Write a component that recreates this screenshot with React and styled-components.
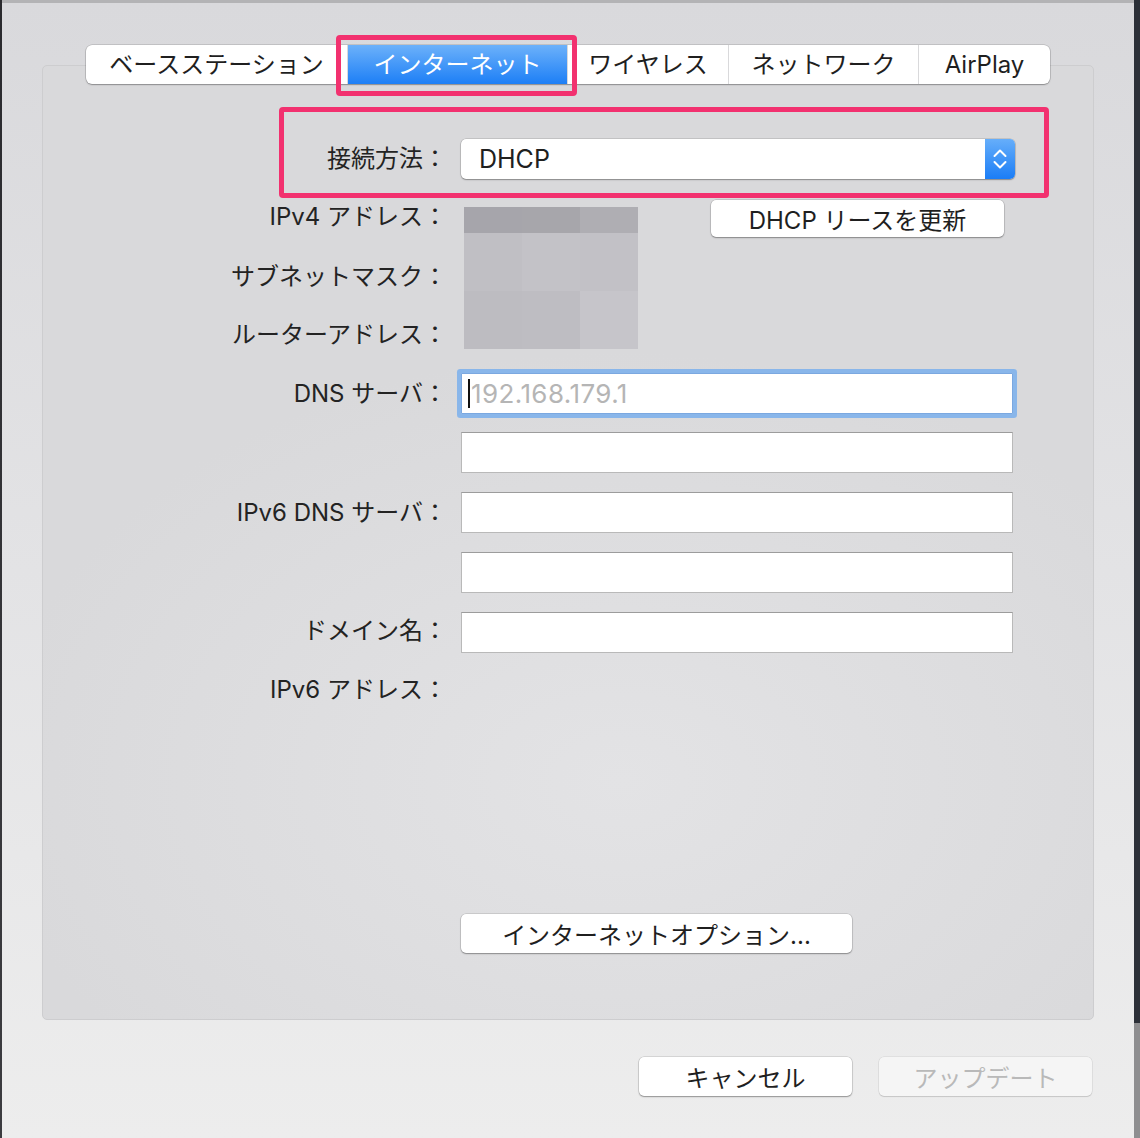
import React from 'react';
import styled, { createGlobalStyle } from 'styled-components';

const Global = createGlobalStyle`
  html, body { margin: 0; padding: 0; background: #e6e6e8; }
  body { font-family: "Inter", "Noto Sans CJK JP", sans-serif; color: #222; }
  * { box-sizing: border-box; }
`;

const Screen = styled.div`
  position: relative;
  width: 1140px;
  height: 1138px;
  display: flex;
  overflow: hidden;
  background: #2d3139;
`;

const LeftEdge = styled.div`
  flex: 0 0 2px;
  background: linear-gradient(#2a2a2e, #3c3c40);
`;

const RightEdge = styled.div`
  flex: 0 0 6px;
  display: flex;
  flex-direction: column;
`;

const EdgePart = styled.div`
  flex: ${(p) => (p.$fill ? 1 : `0 0 ${p.$h}px`)};
  background: ${(p) => p.$c};
`;

const Window = styled.div`
  flex: 1 1 auto;
  min-width: 0;
  display: flex;
  flex-direction: column;
  border-top: 3px solid #b3b3b5;
  background: linear-gradient(to bottom, #d9d9dc 0%, #e3e3e5 50%, #ededed 100%);
  padding: 42px 0 0 40px;
`;

const TabView = styled.div`
  width: 1052px;
  display: flex;
  flex-direction: column;
  align-items: center;
`;

const TabBar = styled.div`
  position: relative;
  z-index: 1;
  display: flex;
  height: 39px;
  background: #fff;
  border-radius: 6px;
  box-shadow: 0 0 0 0.5px rgba(0, 0, 0, 0.22), 0 1px 1.5px rgba(0, 0, 0, 0.28);
  overflow: hidden;
`;

const Tab = styled.div`
  width: ${(p) => p.$w}px;
  display: flex;
  align-items: center;
  justify-content: center;
  font-size: 24px;
  line-height: 39px;
  white-space: nowrap;
  color: ${(p) => (p.$active ? '#fff' : '#1f1f1f')};
  background: ${(p) => (p.$active ? 'linear-gradient(#6cb1fa, #1d7ff6)' : 'transparent')};
  border-left: ${(p) => (p.$first ? 'none' : '1px solid #d9d9db')};
`;

const GroupBox = styled.div`
  width: 1052px;
  height: 955px;
  margin-top: -19px;
  display: flex;
  flex-direction: column;
  padding: 73px 0 66px 0;
  border-radius: 5px;
  border: 1px solid #cdcdcf;
  background: radial-gradient(ellipse 60% 45% at 55% 75%, #e3e3e5 0%, #d9d9db 100%);
`;

const FormGrid = styled.div`
  display: grid;
  grid-template-columns: 404px 552px;
  column-gap: 14px;
  grid-auto-rows: 40px;
  row-gap: 19px;
`;

const Label = styled.div`
  grid-column: 1;
  grid-row: ${(p) => p.$row};
  justify-self: end;
  align-self: center;
  margin-top: ${(p) => p.$dy || 0}px;
  font-size: 24px;
  line-height: 40px;
  white-space: nowrap;
  color: #232323;
`;

const Popup = styled.div`
  grid-column: 2;
  grid-row: 1;
  width: 554px;
  height: 40px;
  display: flex;
  background: #fff;
  border-radius: 5px;
  box-shadow: 0 0 0 0.5px rgba(0, 0, 0, 0.2), 0 1px 1.5px rgba(0, 0, 0, 0.3);
  overflow: hidden;
`;

const PopupValue = styled.div`
  flex: 1;
  padding-left: 18px;
  font-size: 25px;
  line-height: 40px;
  color: #202020;
`;

const Stepper = styled.div`
  width: 30px;
  display: flex;
  align-items: center;
  justify-content: center;
  background: linear-gradient(#66aefa, #1b7df6);
`;

const PushButton = styled.div`
  width: ${(p) => p.$w}px;
  height: ${(p) => p.$h || 39}px;
  display: flex;
  align-items: center;
  justify-content: center;
  background: ${(p) => (p.$disabled ? '#f5f5f5' : '#fff')};
  color: ${(p) => (p.$disabled ? '#b9b9b9' : '#1f1f1f')};
  border-radius: 5px;
  box-shadow: ${(p) =>
    p.$disabled
      ? '0 0 0 0.5px rgba(0,0,0,0.1), 0 1px 1px rgba(0,0,0,0.12)'
      : '0 0 0 0.5px rgba(0,0,0,0.18), 0 1px 1.5px rgba(0,0,0,0.32)'};
  font-size: 24px;
  white-space: nowrap;
`;

const RenewButton = styled(PushButton)`
  grid-column: 2;
  grid-row: 2;
  justify-self: start;
  align-self: start;
  margin: 2px 0 0 250px;
`;

const Mosaic = styled.div`
  grid-column: 2;
  grid-row: 2 / 5;
  justify-self: start;
  align-self: start;
  margin: 9px 0 0 3px;
  display: grid;
  grid-template-columns: repeat(3, 58px);
  grid-template-rows: 26px 58px 58px;
`;

const Cell = styled.div`
  background: ${(p) => p.$c};
`;

const Field = styled.div`
  grid-column: 2;
  grid-row: ${(p) => p.$row};
  height: 41px;
  margin-top: ${(p) => p.$dy || 0}px;
  display: flex;
  align-items: center;
  padding-left: 6px;
  background: #fff;
  border: 1px solid #b9b9b9;
  border-top-color: #9c9c9c;
  ${(p) =>
    p.$focused &&
    `
    border-color: #7ba8e0;
    border-radius: 1px;
    box-shadow: 0 0 0 4px #89b6ea;
  `}
`;

const Caret = styled.span`
  width: 2px;
  height: 29px;
  background: #111;
  margin-right: 1px;
`;

const Placeholder = styled.span`
  font-size: 26px;
  color: #b5b5b5;
  letter-spacing: 0.4px;
`;

const OptionRow = styled.div`
  margin-top: auto;
  padding-left: 418px;
`;

const Footer = styled.div`
  display: flex;
  justify-content: flex-end;
  gap: 27px;
  margin-top: 37px;
  padding-right: 42px;
`;

const Highlight = styled.div`
  position: absolute;
  left: ${(p) => p.$x}px;
  top: ${(p) => p.$y}px;
  width: ${(p) => p.$w}px;
  height: ${(p) => p.$h}px;
  border: 5px solid #f2316f;
  border-radius: 4px;
  pointer-events: none;
  z-index: 5;
`;

const tabs = [
  { label: 'ベースステーション', w: 261 },
  { label: 'インターネット', w: 220, active: true },
  { label: 'ワイヤレス', w: 161 },
  { label: 'ネットワーク', w: 190 },
  { label: 'AirPlay', w: 132 },
];

const labels = [
  { text: '接続方法：', row: 1 },
  { text: 'IPv4 アドレス：', row: 2, dy: -2 },
  { text: 'サブネットマスク：', row: 3 },
  { text: 'ルーターアドレス：', row: 4, dy: -2 },
  { text: 'DNS サーバ：', row: 5, dy: -2 },
  { text: 'IPv6 DNS サーバ：', row: 7 },
  { text: 'ドメイン名：', row: 9 },
  { text: 'IPv6 アドレス：', row: 10 },
];

const fields = [
  { row: 5, dy: -2, focused: true },
  { row: 6, dy: -2 },
  { row: 7, dy: -1 },
  { row: 8 },
  { row: 9, dy: 1 },
];

const mosaic = [
  '#a6a5ab', '#a7a6ab', '#afaeb3',
  '#c0bfc4', '#c3c2c7', '#c2c1c6',
  '#bdbcc1', '#bebdc2', '#c6c5ca',
];

function Chevrons() {
  return (
    <svg width="30" height="40" viewBox="0 0 30 40">
      <path d="M9.5 17 L15 11.5 L20.5 17" fill="none" stroke="#fff" strokeWidth="2" strokeLinecap="round" strokeLinejoin="round" />
      <path d="M9.5 23 L15 28.5 L20.5 23" fill="none" stroke="#fff" strokeWidth="2" strokeLinecap="round" strokeLinejoin="round" />
    </svg>
  );
}

export default function App() {
  return (
    <>
      <Global />
      <Screen>
        <LeftEdge />
        <Window>
          <TabView>
            <TabBar>
              {tabs.map((t, i) => (
                <Tab key={t.label} $w={t.w} $active={t.active} $first={i === 0}>
                  {t.label}
                </Tab>
              ))}
            </TabBar>
            <GroupBox>
              <FormGrid>
                {labels.map((l) => (
                  <Label key={l.text} $row={l.row} $dy={l.dy}>{l.text}</Label>
                ))}
                <Popup>
                  <PopupValue>DHCP</PopupValue>
                  <Stepper><Chevrons /></Stepper>
                </Popup>
                <Mosaic>
                  {mosaic.map((c, i) => (
                    <Cell key={i} $c={c} />
                  ))}
                </Mosaic>
                <RenewButton $w={293} $h={37}>DHCP リースを更新</RenewButton>
                {fields.map((f) => (
                  <Field key={f.row} $row={f.row} $dy={f.dy} $focused={f.focused}>
                    {f.focused && (
                      <>
                        <Caret />
                        <Placeholder>192.168.179.1</Placeholder>
                      </>
                    )}
                  </Field>
                ))}
              </FormGrid>
              <OptionRow>
                <PushButton $w={391}>インターネットオプション...</PushButton>
              </OptionRow>
            </GroupBox>
          </TabView>
          <Footer>
            <PushButton $w={213}>キャンセル</PushButton>
            <PushButton $w={213} $disabled>アップデート</PushButton>
          </Footer>
        </Window>
        <RightEdge>
          <EdgePart $h={1023} $c="#2c3038" />
          <EdgePart $fill $c="#8e8e90" />
        </RightEdge>
        <Highlight $x={336} $y={35} $w={241} $h={61} />
        <Highlight $x={279} $y={107} $w={770} $h={91} />
      </Screen>
    </>
  );
}
